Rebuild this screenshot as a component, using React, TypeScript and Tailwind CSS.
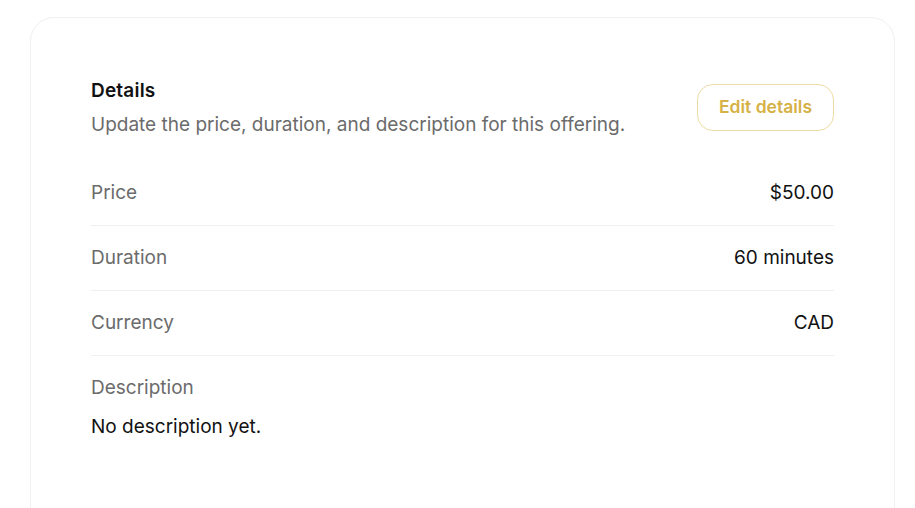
import React from 'react';

const rows = [
  { label: 'Price', value: '$50.00' },
  { label: 'Duration', value: '60 minutes' },
  { label: 'Currency', value: 'CAD' },
];

function App() {
  return (
    <div
      className="min-h-screen bg-white pl-[30px] pr-[20px] pt-[17px]"
      style={{ fontFamily: 'Inter, "Liberation Sans", sans-serif' }}
    >
      <div className="min-h-[520px] rounded-t-[24px] border border-[#f0f0f0] px-[60px] pt-[61px]">
        {/* header */}
        <div className="mb-[22px] flex items-center justify-between">
          <div>
            <h2 className="text-[19px] font-semibold leading-6 tracking-[0.2px] text-[#111]">Details</h2>
            <p className="mt-2 text-[19px] leading-7 text-[#6b6b6b]">
              Update the price, duration, and description for this offering.
            </p>
          </div>
          <button className="-mt-[3px] h-[47px] w-[137px] rounded-2xl border border-[#eedca6] text-[17.5px] font-semibold text-[#d6b146]">
            Edit details
          </button>
        </div>

        {/* rows */}
        <div>
          {rows.map((r) => (
            <div
              key={r.label}
              className="flex items-center justify-between border-b border-[#f0f0f0] py-[18px] text-[19px] leading-7"
            >
              <span className="text-[#6b6b6b]">{r.label}</span>
              <span className="text-[#111]">{r.value}</span>
            </div>
          ))}
          <div className="pt-[18px] text-[19px] leading-7">
            <div className="text-[#6b6b6b]">Description</div>
            <p className="mt-[11px] text-[#111]">No description yet.</p>
          </div>
        </div>
      </div>
    </div>
  );
}

export default App;
